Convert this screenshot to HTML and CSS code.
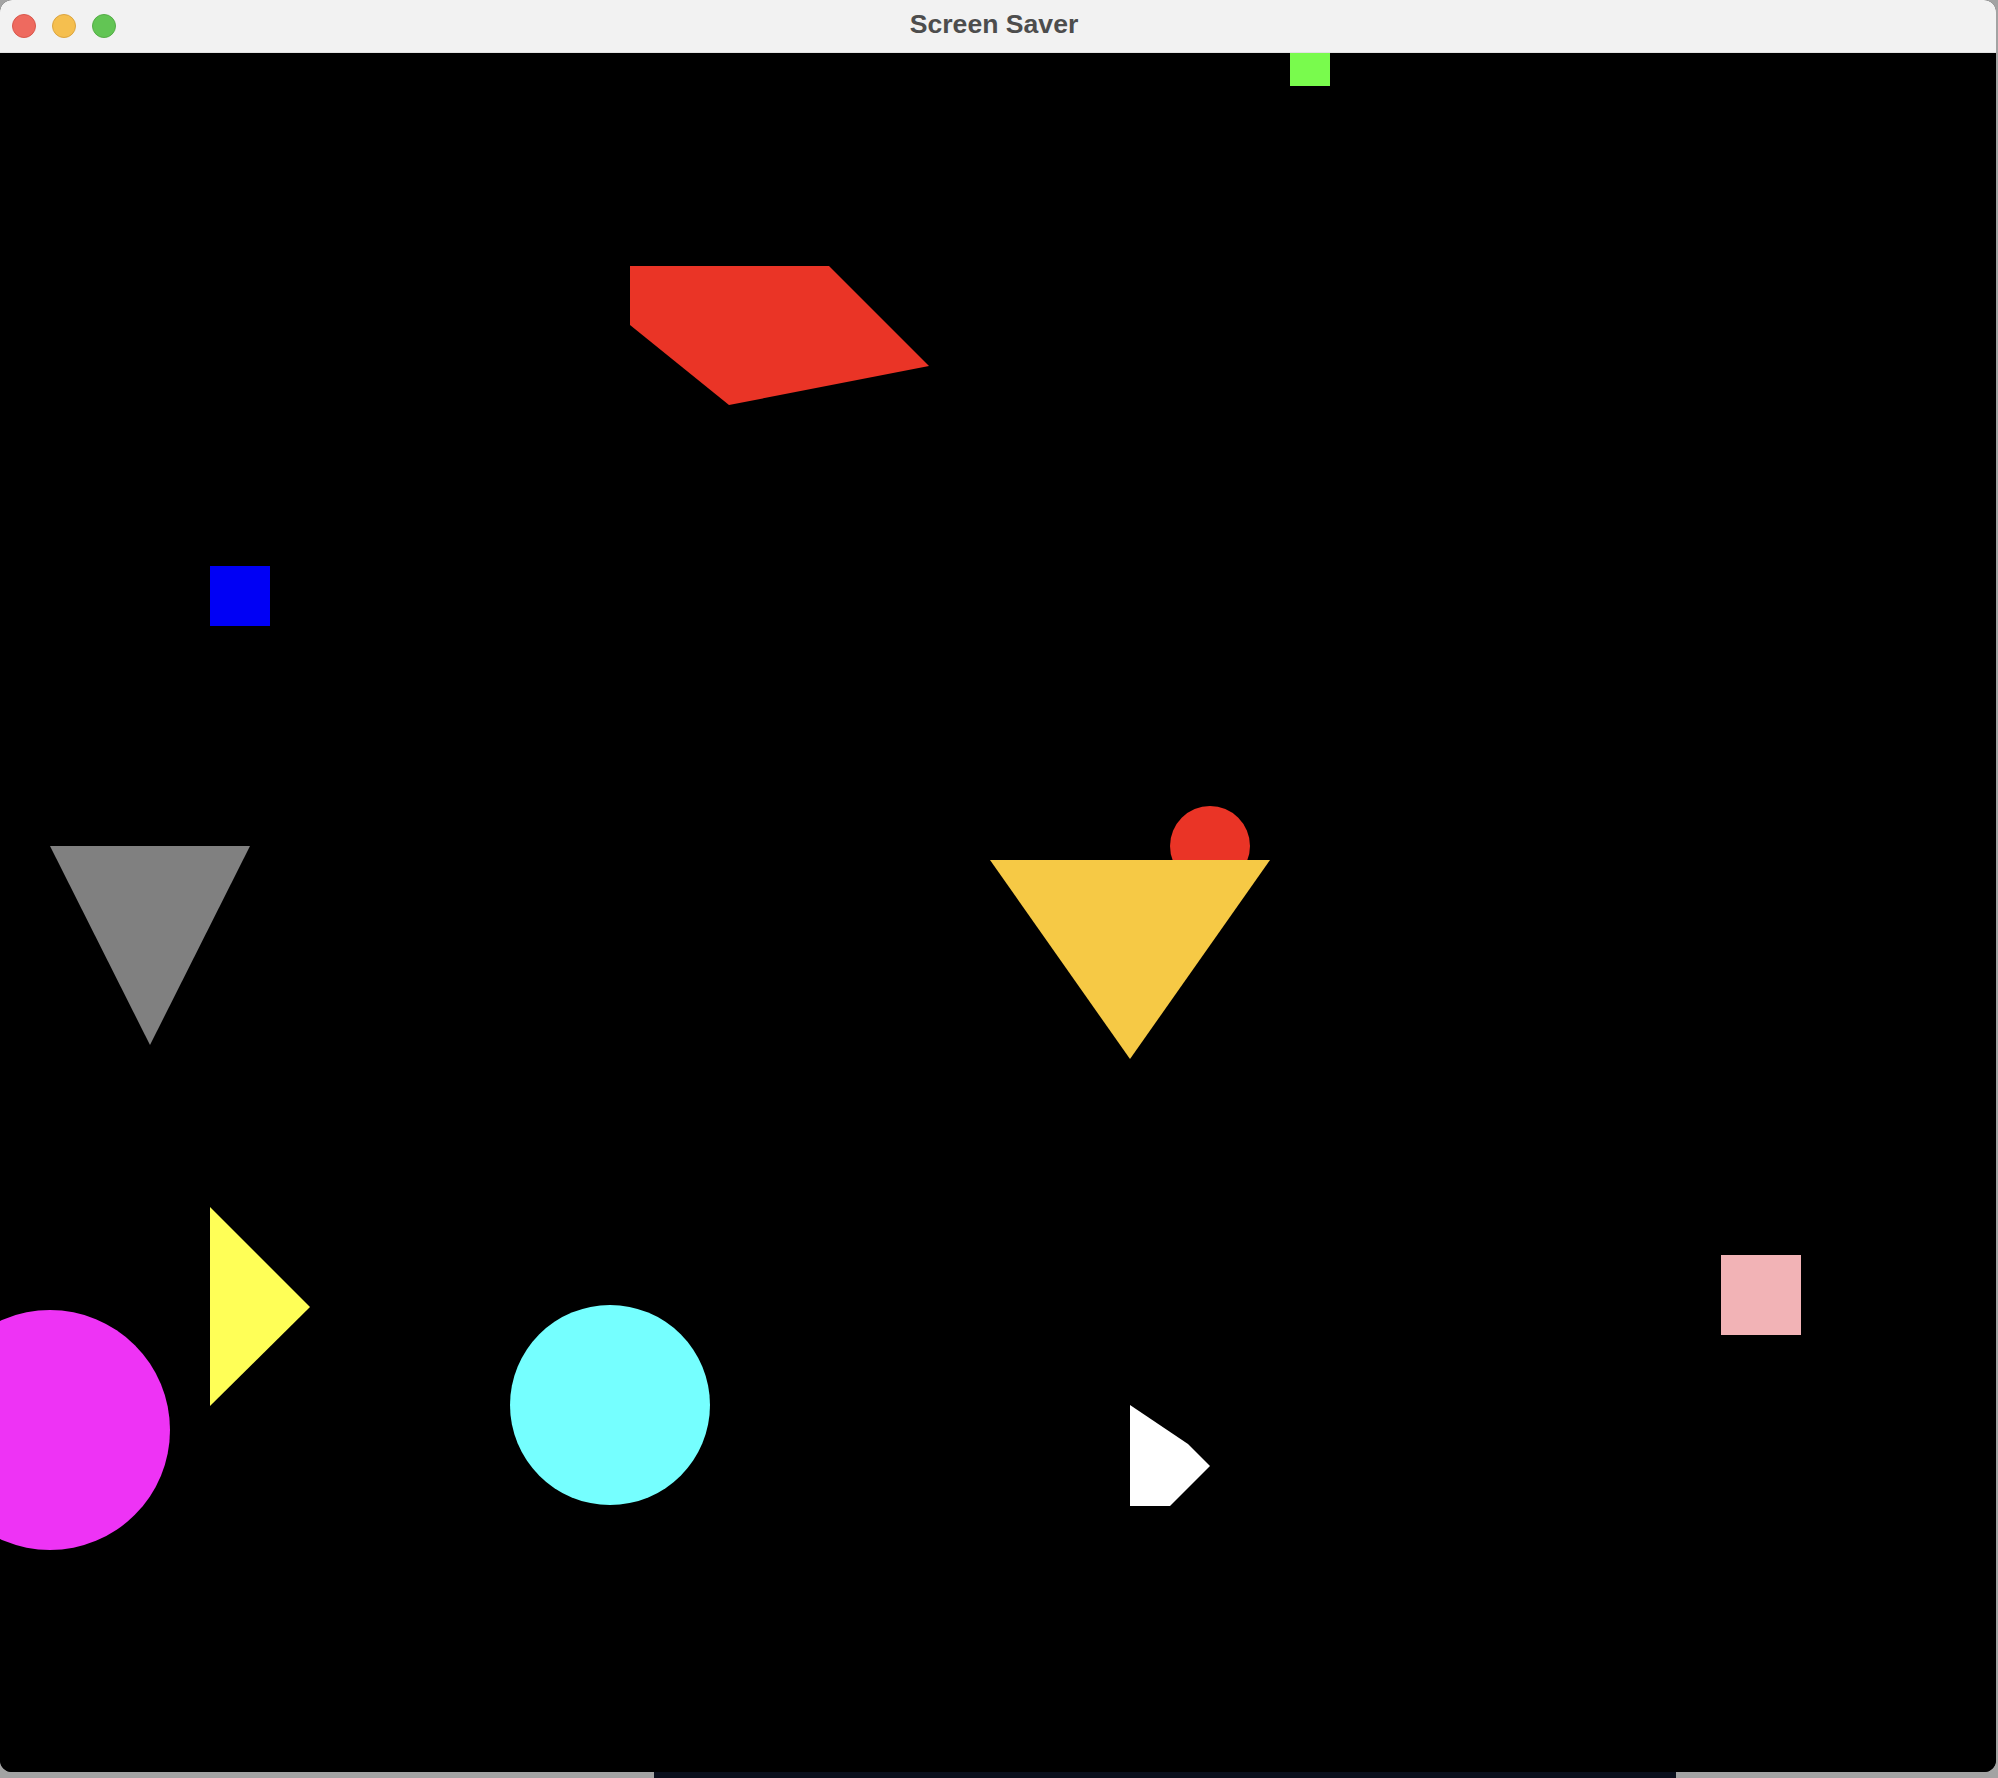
FILE: index.html
```html
<!DOCTYPE html>
<html>
<head>
<meta charset="utf-8">
<title>Screen Saver</title>
<link rel="stylesheet" href="styles.css">
</head>
<body>
<div class="desktop">
  <div class="window">
    <div class="titlebar">
      <div class="lights">
        <span class="light red"></span>
        <span class="light yellow"></span>
        <span class="light green"></span>
      </div>
      <div class="title">Screen Saver</div>
    </div>
    <div class="canvas">
      <svg class="scene" width="1996" height="1719" viewBox="0 0 1996 1719" xmlns="http://www.w3.org/2000/svg">
        <rect x="1290" y="0" width="40" height="33" fill="#79fb4d"/>
        <polygon points="630,213 829,213 929,313 729,352 630,272" fill="#ea3426"/>
        <rect x="210" y="513" width="60" height="60" fill="#0000f5"/>
        <polygon points="50,793 250,793 150,992" fill="#808080"/>
        <circle cx="1210" cy="793" r="40" fill="#ea3426"/>
        <polygon points="990,807 1270,807 1130,1006" fill="#f6c945"/>
        <circle cx="50" cy="1377" r="120" fill="#ee33f5"/>
        <polygon points="210,1154 210,1353 310,1254" fill="#ffff57"/>
        <circle cx="610" cy="1352" r="100" fill="#75ffff"/>
        <polygon points="1130,1352 1188,1391 1210,1413 1170,1453 1130,1453" fill="#ffffff"/>
        <rect x="1721" y="1202" width="80" height="80" fill="#f2b3b6"/>
      </svg>
    </div>
  </div>
  <div class="strip">
    <div class="strip-left"></div>
    <div class="strip-dock"></div>
    <div class="strip-right"></div>
  </div>
</div>
</body>
</html>
```

FILE: styles.css
```css
html, body {
  margin: 0;
  padding: 0;
}
body {
  width: 1998px;
  height: 1778px;
  background: #a3a3a3;
  overflow: hidden;
}
.desktop {
  display: flex;
  flex-direction: column;
  width: 1998px;
  height: 1778px;
}
.window {
  width: 1996px;
  height: 1772px;
  border-radius: 12px;
  overflow: hidden;
  display: flex;
  flex-direction: column;
  background: #000;
  flex: 0 0 auto;
}
.titlebar {
  height: 53px;
  flex: 0 0 53px;
  background: #f2f2f2;
  position: relative;
  display: flex;
  align-items: center;
  justify-content: center;
  box-sizing: border-box;
  border-bottom: 1px solid #e2e2e2;
}
.lights {
  position: absolute;
  left: 12px;
  top: 14px;
  display: flex;
  gap: 16px;
}
.light {
  width: 24px;
  height: 24px;
  border-radius: 50%;
  box-sizing: border-box;
  display: block;
}
.red { background: #ee6a5f; border: 1px solid #d9574c; }
.yellow { background: #f5bf4f; border: 1px solid #dca540; }
.green { background: #62c554; border: 1px solid #55ad47; }
.title {
  font-family: "Liberation Sans", Arial, sans-serif;
  font-weight: bold;
  font-size: 26.6px;
  color: #4d4d4d;
  line-height: 30px;
  margin-top: -5px;
  margin-left: -8px;
}
.canvas {
  flex: 1 1 auto;
  background: #000;
  position: relative;
}
.scene {
  display: block;
}
.strip {
  display: flex;
  height: 6px;
  flex: 0 0 6px;
}
.strip-left {
  width: 654px;
  background: #a3a3a3;
}
.strip-dock {
  width: 1022px;
  background: #0a0f1c;
}
.strip-right {
  flex: 1;
  background: #a3a3a3;
}
```
